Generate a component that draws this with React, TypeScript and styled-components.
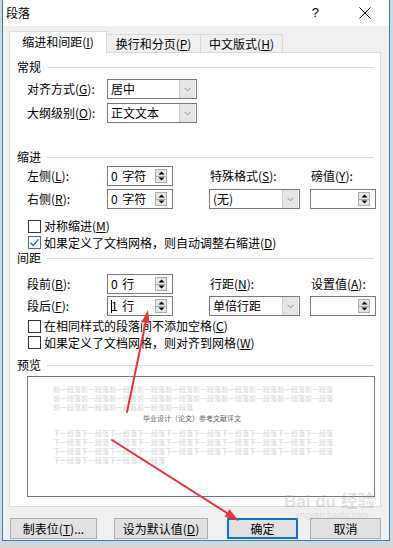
import styled, { createGlobalStyle } from "styled-components";

const GlobalStyle = createGlobalStyle`
  html, body {
    margin: 0;
    padding: 0;
    background: #d6d6d6;
  }
  body {
    font-family: "Noto Sans CJK SC", "Microsoft YaHei", sans-serif;
    font-size: 12px;
    color: #000;
  }
  #root {
    width: 393px;
    height: 548px;
    overflow: hidden;
    position: relative;
  }
`;

const before = "前一段落";
const after = "下一段落";

const Combo = ({ value, width }: { value: string; width: number }) => (
  <ComboBox $width={width}>
    <ComboText>{value}</ComboText>
    <DropButton>
      <svg width="7" height="5" viewBox="0 0 7 5">
        <path d="M0.5 0.8 L3.5 3.8 L6.5 0.8" fill="none" stroke="#8a8a8a" strokeWidth="1" />
      </svg>
    </DropButton>
  </ComboBox>
);

const Spinner = ({ value, caret }: { value: string; caret?: boolean }) => (
  <SpinBox>
    <SpinText>
      {caret && <Caret />}
      {value}
    </SpinText>
    <SpinButtons>
      <SpinHalf>
        <svg width="7" height="4" viewBox="0 0 7 4">
          <path d="M0.5 3.5 L3.5 0.5 L6.5 3.5 Z" fill="#000" />
        </svg>
      </SpinHalf>
      <SpinHalf $bottom>
        <svg width="7" height="4" viewBox="0 0 7 4">
          <path d="M0.5 0.5 L3.5 3.5 L6.5 0.5 Z" fill="#000" />
        </svg>
      </SpinHalf>
    </SpinButtons>
  </SpinBox>
);

const Check = ({ checked, children }: { checked?: boolean; children: React.ReactNode }) => (
  <CheckRow>
    <Box $checked={checked}>
      {checked && (
        <svg width="11" height="11" viewBox="0 0 11 11">
          <path d="M1.5 5.8 L4.2 8.4 L9.6 2.4" fill="none" stroke="#1a73d1" strokeWidth="1.4" />
        </svg>
      )}
    </Box>
    <span>{children}</span>
  </CheckRow>
);

const App = () => {
  return (
    <>
      <GlobalStyle />
      <Window>
        <TitleBar>
          <Title>段落</Title>
          <Help>?</Help>
          <Close>
            <svg width="12" height="12" viewBox="0 0 12 12">
              <path d="M0.5 0.5 L11.5 11.5 M11.5 0.5 L0.5 11.5" stroke="#000" strokeWidth="1" />
            </svg>
          </Close>
        </TitleBar>
        <Body>
          <Tabs>
            <Tab $active $width={98} $first>
              缩进和间距(<u>I</u>)
            </Tab>
            <Tab $width={94}>
              换行和分页(<u>P</u>)
            </Tab>
            <Tab $width={82}>
              中文版式(<u>H</u>)
            </Tab>
          </Tabs>
          <Panel>
            <SectionHead $top={7}>常规</SectionHead>
            <FieldRow $top={5}>
              <Label>
                对齐方式(<u>G</u>):
              </Label>
              <Combo value="居中" width={90} />
            </FieldRow>
            <FieldRow $top={4}>
              <Label>
                大纲级别(<u>O</u>):
              </Label>
              <Combo value="正文文本" width={90} />
            </FieldRow>

            <SectionHead $top={27}>缩进</SectionHead>
            <Grid $top={2} $gap={3}>
              <Label>
                左侧(<u>L</u>):
              </Label>
              <Spinner value="0 字符" />
              <ColLabel>
                特殊格式(<u>S</u>):
              </ColLabel>
              <ColLabel>
                磅值(<u>Y</u>):
              </ColLabel>
              <Label>
                右侧(<u>R</u>):
              </Label>
              <Spinner value="0 字符" />
              <Combo value="(无)" width={91} />
              <Spinner value="" />
            </Grid>
            <Checks $top={9}>
              <Check>
                对称缩进(<u>M</u>)
              </Check>
              <Check checked>
                如果定义了文档网格，则自动调整右缩进(<u>D</u>)
              </Check>
            </Checks>

            <SectionHead $top={0}>间距</SectionHead>
            <Grid $top={9} $gap={2}>
              <Label>
                段前(<u>B</u>):
              </Label>
              <Spinner value="0 行" />
              <ColLabel>
                行距(<u>N</u>):
              </ColLabel>
              <ColLabel>
                设置值(<u>A</u>):
              </ColLabel>
              <Label>
                段后(<u>F</u>):
              </Label>
              <Spinner value="1 行" caret />
              <Combo value="单倍行距" width={91} />
              <Spinner value="" />
            </Grid>
            <Checks $top={2}>
              <Check>
                在相同样式的段落间不添加空格(<u>C</u>)
              </Check>
              <Check>
                如果定义了文档网格，则对齐到网格(<u>W</u>)
              </Check>
            </Checks>

            <SectionHead $top={7}>预览</SectionHead>
            <Preview>
              <PreviewLine>{before.repeat(10)}</PreviewLine>
              <PreviewLine>{before.repeat(10)}</PreviewLine>
              <PreviewLine>{before.repeat(5)}</PreviewLine>
              <SampleLine>毕业设计（论文）参考文献评文</SampleLine>
              <PreviewLine $gapTop={6}>{after.repeat(10)}</PreviewLine>
              <PreviewLine>{after.repeat(10)}</PreviewLine>
              <PreviewLine>{after.repeat(10)}</PreviewLine>
              <PreviewLine>{after.repeat(4)}</PreviewLine>
            </Preview>
          </Panel>
          <ButtonBar>
            <ButtonGroup $gap={17}>
              <Button $width={87}>
                制表位(<u>T</u>)...
              </Button>
              <Button $width={94}>
                设为默认值(<u>D</u>)
              </Button>
            </ButtonGroup>
            <ButtonGroup $gap={12}>
              <Button $width={71} $primary>
                确定
              </Button>
              <Button $width={71}>取消</Button>
            </ButtonGroup>
          </ButtonBar>
        </Body>
      </Window>

      <Watermark>
        <MarkTop>Bai du 经验</MarkTop>
        <MarkBottom>jingyan.baidu.com</MarkBottom>
      </Watermark>

      <Arrows width="393" height="548" viewBox="0 0 393 548">
        <g stroke="#e8343b" strokeWidth="2" strokeLinecap="round">
          <line x1="127" y1="412" x2="145.6" y2="322.7" />
          <line x1="112" y1="440" x2="227" y2="513" />
        </g>
        <g fill="#e8343b">
          <path d="M148 310 L149.6 323.6 L141.6 321.9 Z" />
          <path d="M239 521 L224.6 516.8 L229.4 509.2 Z" />
        </g>
      </Arrows>
    </>
  );
};

const Window = styled.div`
  width: 386px;
  height: 540px;
  margin-left: 2px;
  border: 1px solid #2c7fd0;
  border-top: none;
  background: #f0f0f0;
  display: flex;
  flex-direction: column;
`;

const TitleBar = styled.div`
  height: 26px;
  background: #fff;
  display: flex;
  align-items: center;
  padding-left: 3px;
`;

const Title = styled.div`
  font-size: 12px;
  line-height: 16px;
  margin-top: -1px;
`;

const Help = styled.div`
  margin-left: auto;
  font-family: "Liberation Sans", sans-serif;
  font-size: 13px;
  line-height: 16px;
  margin-right: 40px;
`;

const Close = styled.div`
  display: flex;
  margin-right: 18px;
`;

const Body = styled.div`
  flex: 1;
  padding: 5px 8px 0 6px;
  display: flex;
  flex-direction: column;
`;

const Tabs = styled.div`
  display: flex;
  align-items: flex-end;
  height: 22px;
  margin-bottom: -1px;
  position: relative;
  z-index: 1;
`;

const Tab = styled.div<{ $active?: boolean; $width: number; $first?: boolean }>`
  width: ${(p) => p.$width}px;
  box-sizing: border-box;
  height: ${(p) => (p.$active ? 22 : 18)}px;
  margin-bottom: ${(p) => (p.$active ? 0 : 1)}px;
  background: ${(p) => (p.$active ? "#fff" : "#f0f0f0")};
  border: 1px solid #d9d9d9;
  border-bottom: none;
  border-left: ${(p) => (p.$first ? "1px solid #d9d9d9" : "none")};
  display: flex;
  align-items: center;
  justify-content: center;
  font-size: 12px;
  line-height: 16px;
  padding-bottom: ${(p) => (p.$active ? 1 : 0)}px;
  white-space: nowrap;
`;

const Panel = styled.div`
  width: 372px;
  height: 455px;
  box-sizing: border-box;
  background: #fff;
  border: 1px solid #d9d9d9;
  padding: 0 6px 0 7px;
  display: flex;
  flex-direction: column;
`;

const SectionHead = styled.div<{ $top: number }>`
  margin-top: ${(p) => p.$top}px;
  height: 14px;
  display: flex;
  align-items: center;
  gap: 6px;
  font-size: 12px;
  line-height: 14px;

  &::after {
    content: "";
    flex: 1;
    height: 1px;
    background: #dcdcdc;
  }
`;

const FieldRow = styled.div<{ $top: number }>`
  margin-top: ${(p) => p.$top}px;
  margin-left: 10px;
  display: flex;
  align-items: center;
`;

const Label = styled.div`
  width: 80px;
  font-size: 12px;
  line-height: 16px;
  white-space: nowrap;
`;

const ColLabel = styled(Label)`
  width: auto;
  padding-left: 1px;
  align-self: center;
`;

const Grid = styled.div<{ $top: number; $gap: number }>`
  margin-top: ${(p) => p.$top}px;
  margin-left: 10px;
  display: grid;
  grid-template-columns: 80px 102px 101px 65px;
  grid-auto-rows: 20px;
  row-gap: ${(p) => p.$gap}px;
  align-items: center;
`;

const ComboBox = styled.div<{ $width: number }>`
  width: ${(p) => p.$width}px;
  height: 20px;
  box-sizing: border-box;
  border: 1px solid #7a7a7a;
  background: #fff;
  display: flex;
  align-items: stretch;
`;

const ComboText = styled.div`
  flex: 1;
  padding-left: 3px;
  font-size: 12px;
  line-height: 18px;
  white-space: nowrap;
`;

const DropButton = styled.div`
  width: 15px;
  margin: 0 1px 0 0;
  background: #e5e5e5;
  border-left: 1px solid #cfcfcf;
  display: flex;
  align-items: center;
  justify-content: center;
`;

const SpinBox = styled.div`
  width: 66px;
  height: 20px;
  box-sizing: border-box;
  border: 1px solid #7a7a7a;
  background: #fff;
  display: flex;
  align-items: center;
`;

const SpinText = styled.div`
  flex: 1;
  padding-left: 3px;
  font-size: 12px;
  line-height: 18px;
  white-space: pre;
  word-spacing: 2px;
  display: flex;
  align-items: center;
`;

const Caret = styled.span`
  width: 1px;
  height: 13px;
  background: #000;
  margin-right: -1px;
`;

const SpinButtons = styled.div`
  width: 12px;
  height: 14px;
  box-sizing: border-box;
  margin-right: 5px;
  border: 1px solid #adadad;
  background: #e6e6e6;
  display: flex;
  flex-direction: column;
`;

const SpinHalf = styled.div<{ $bottom?: boolean }>`
  flex: 1;
  display: flex;
  align-items: center;
  justify-content: center;
  border-top: ${(p) => (p.$bottom ? "1px solid #adadad" : "none")};
`;

const Checks = styled.div<{ $top: number }>`
  margin-top: ${(p) => p.$top}px;
  margin-left: 11px;
  display: flex;
  flex-direction: column;
`;

const CheckRow = styled.div`
  height: 16.5px;
  display: flex;
  align-items: center;
  gap: 3px;
  font-size: 12px;
  line-height: 16px;
  white-space: nowrap;
`;

const Box = styled.div<{ $checked?: boolean }>`
  width: 13px;
  height: 13px;
  box-sizing: border-box;
  border: 1px solid ${(p) => (p.$checked ? "#4d6b8a" : "#333")};
  background: #fff;
  display: flex;
  align-items: center;
  justify-content: center;
`;

const Preview = styled.div`
  margin: 4px 0 0 10px;
  width: 348px;
  height: 121px;
  box-sizing: border-box;
  border: 1px solid #777;
  background: #fff;
  padding: 8px 0 0 25px;
  display: flex;
  flex-direction: column;
`;

const PreviewLine = styled.div<{ $gapTop?: number }>`
  margin-top: ${(p) => p.$gapTop ?? 0}px;
  font-size: 7px;
  line-height: 9.2px;
  height: 9.2px;
  color: #d6d6d6;
  white-space: nowrap;
`;

const SampleLine = styled.div`
  margin: 1px 0 0 90px;
  font-size: 7px;
  line-height: 9px;
  color: #666;
  white-space: nowrap;
`;

const ButtonBar = styled.div`
  margin-top: 11px;
  padding-left: 1px;
  width: 371px;
  display: flex;
  justify-content: space-between;
`;

const ButtonGroup = styled.div<{ $gap: number }>`
  display: flex;
  gap: ${(p) => p.$gap}px;
`;

const Button = styled.div<{ $width: number; $primary?: boolean }>`
  width: ${(p) => p.$width}px;
  height: 21px;
  box-sizing: border-box;
  background: #e1e1e1;
  border: ${(p) => (p.$primary ? "2px solid #0a74d6" : "1px solid #adadad")};
  display: flex;
  align-items: center;
  justify-content: center;
  font-size: 12px;
  line-height: 16px;
  white-space: nowrap;
`;

const Watermark = styled.div`
  position: absolute;
  left: 284px;
  top: 493px;
  pointer-events: none;
  display: flex;
  flex-direction: column;
  align-items: flex-start;
  color: rgba(150, 150, 150, 0.28);
  font-family: "Liberation Sans", "Noto Sans CJK SC", sans-serif;
`;

const MarkTop = styled.div`
  font-size: 17px;
  font-weight: bold;
  line-height: 18px;
`;

const MarkBottom = styled.div`
  font-size: 9px;
  line-height: 9px;
  margin-left: 12px;
`;

const Arrows = styled.svg`
  position: absolute;
  left: 0;
  top: 0;
  pointer-events: none;
`;

export default App;
